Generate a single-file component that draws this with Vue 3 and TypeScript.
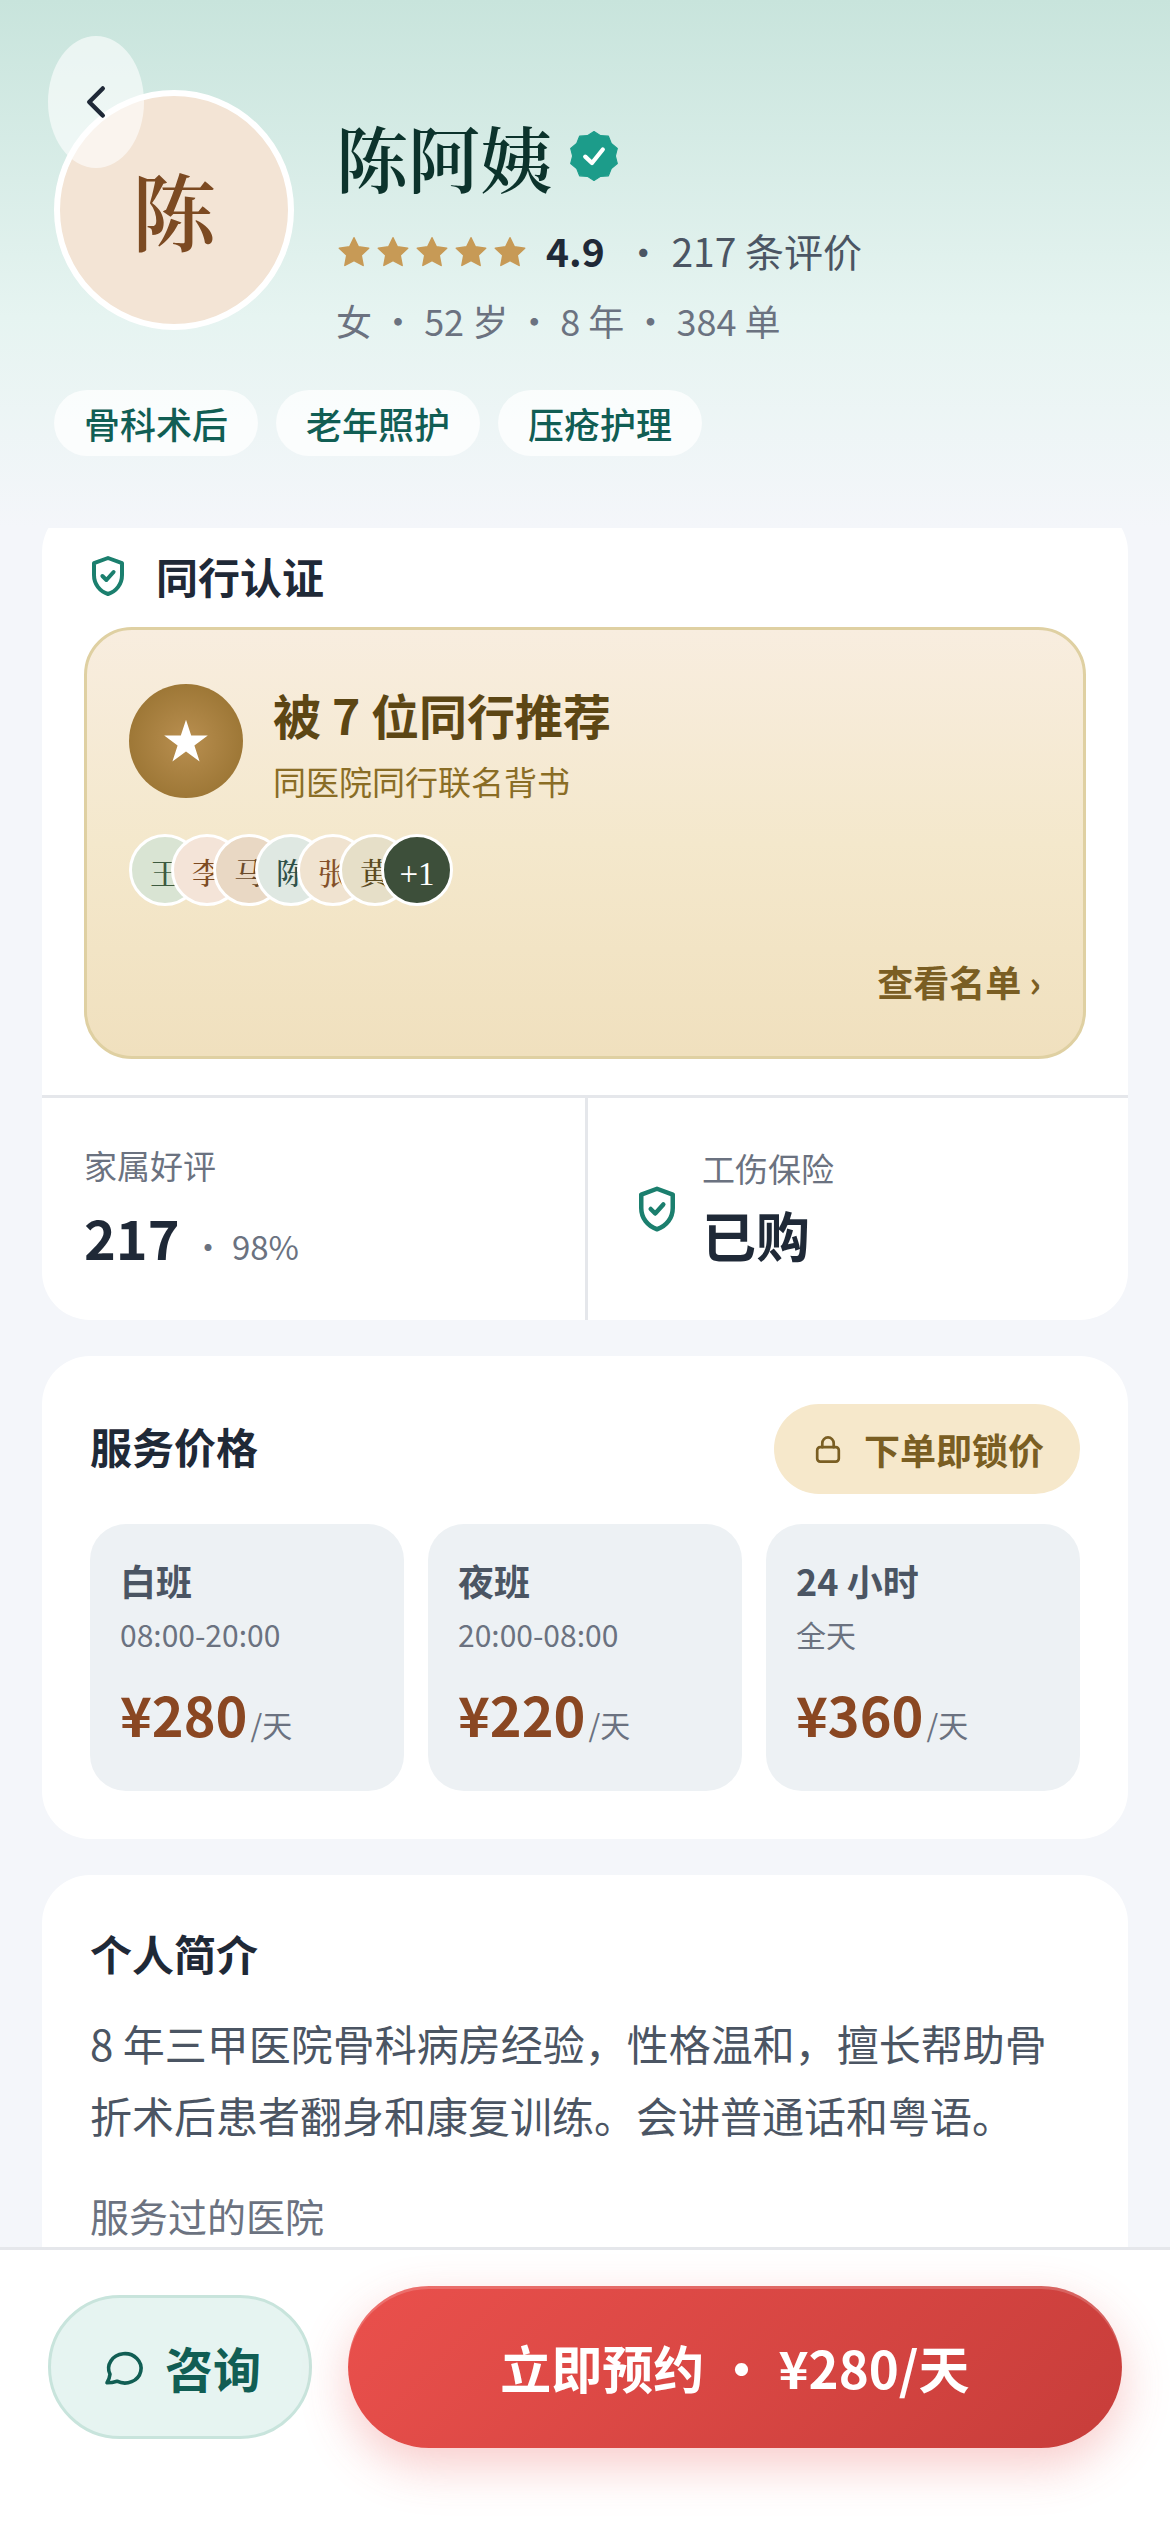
<script setup lang="ts">
interface Peer {
  name: string
  bg: string
  color: string
}

interface Shift {
  title: string
  time: string
  price: number
}

const tags: string[] = ['骨科术后', '老年照护', '压疮护理']

const peers: Peer[] = [
  { name: '王', bg: '#d9e4d3', color: '#3d5a3f' },
  { name: '李', bg: '#f4e4d8', color: '#7c4a22' },
  { name: '马', bg: '#e9d8c4', color: '#6b4a2a' },
  { name: '陈', bg: '#dfe8e2', color: '#2f5148' },
  { name: '张', bg: '#f0e3d0', color: '#84512a' },
  { name: '黄', bg: '#e6dfc8', color: '#5a4a1e' },
]

const shifts: Shift[] = [
  { title: '白班', time: '08:00-20:00', price: 280 },
  { title: '夜班', time: '20:00-08:00', price: 220 },
  { title: '24 小时', time: '全天', price: 360 },
]
</script>

<template>
  <div class="screen">
    <header class="hero">
      <button class="back" aria-label="返回">
        <svg width="54" height="54" viewBox="0 0 24 24" fill="none" stroke="currentColor" stroke-width="2" stroke-linecap="round" stroke-linejoin="round">
          <path d="M15 18 L9 12 L15 6" />
        </svg>
      </button>
      <div class="profile">
        <div class="avatar">陈</div>
        <div class="info">
          <div class="name-row">
            <h1>陈阿姨</h1>
            <svg width="54" height="54" viewBox="0 0 24 24">
              <path
                d="M12 1.1 L14.94 2.97 L18.41 3.18 L19.69 6.42 L22.37 8.63 L21.5 12 L22.37 15.37 L19.69 17.58 L18.41 20.82 L14.94 21.03 L12 22.9 L9.06 21.03 L5.59 20.82 L4.31 17.58 L1.63 15.37 L2.5 12 L1.63 8.63 L4.31 6.42 L5.59 3.18 L9.06 2.97 Z"
                fill="#1c9c8a"
                stroke="#1c9c8a"
                stroke-width=".5"
                stroke-linejoin="round"
              />
              <path d="M8.1 12.3 L11.1 15.1 L15.9 9.1" fill="none" stroke="#fff" stroke-width="1.9" stroke-linecap="round" stroke-linejoin="round" />
            </svg>
          </div>
          <div class="rating">
            <span class="stars">
              <svg v-for="n in 5" :key="n" width="36" height="36" viewBox="0 0 24 24" fill="#c79a56" stroke="#c79a56" stroke-width="1" stroke-linejoin="round">
                <path d="M12 3.2 L14.9 9.2 L21.8 10.1 L16.8 14.8 L18.1 21.6 L12 18.4 L5.9 21.6 L7.2 14.8 L2.2 10.1 L9.1 9.2 Z" />
              </svg>
            </span>
            <b>4.9</b>
            <span class="reviews">· 217 条评价</span>
          </div>
          <div class="meta">女 · 52 岁 · 8 年 · 384 单</div>
        </div>
      </div>
      <div class="tags">
        <span v-for="tag in tags" :key="tag" class="tag">{{ tag }}</span>
      </div>
    </header>

    <main class="content">
      <section class="card trust">
        <div class="trust-head">
          <svg width="48" height="48" viewBox="0 0 24 24" fill="none" stroke="#1b7f6e" stroke-width="2" stroke-linecap="round" stroke-linejoin="round">
            <path d="M12 3 L19 5.6 V11.5 C19 16 16.2 19.6 12 21 C7.8 19.6 5 16 5 11.5 V5.6 Z" />
            <path d="M9.2 12 L11.2 14 L14.8 10" />
          </svg>
          <h2>同行认证</h2>
        </div>
        <div class="endorse">
          <div class="endorse-top">
            <div class="medal">
              <svg width="48" height="48" viewBox="0 0 24 24" fill="#fff">
                <path d="M12 1.4 L14.6 9.3 L22.9 9.3 L16.2 14.2 L18.8 22.2 L12 17.3 L5.2 22.2 L7.8 14.2 L1.1 9.3 L9.4 9.3 Z" />
              </svg>
            </div>
            <div>
              <div class="endorse-title">被 7 位同行推荐</div>
              <div class="endorse-sub">同医院同行联名背书</div>
            </div>
          </div>
          <div class="peers">
            <span v-for="peer in peers" :key="peer.name" class="peer" :style="{ background: peer.bg, color: peer.color }">{{ peer.name }}</span>
            <span class="peer extra">+1</span>
          </div>
          <a class="more">查看名单 ›</a>
        </div>
        <div class="stats">
          <div class="stat family">
            <div class="label">家属好评</div>
            <div class="value">217<small>· 98%</small></div>
          </div>
          <div class="stat insurance">
            <svg width="54" height="54" viewBox="0 0 24 24" fill="none" stroke="#1b7f6e" stroke-width="2" stroke-linecap="round" stroke-linejoin="round">
              <path d="M12 3 L19 5.6 V11.5 C19 16 16.2 19.6 12 21 C7.8 19.6 5 16 5 11.5 V5.6 Z" />
              <path d="M9.2 12 L11.2 14 L14.8 10" />
            </svg>
            <div>
              <div class="label">工伤保险</div>
              <div class="value">已购</div>
            </div>
          </div>
        </div>
      </section>

      <section class="card prices">
        <div class="prices-head">
          <h2>服务价格</h2>
          <span class="lock">
            <svg width="36" height="36" viewBox="0 0 24 24" fill="none" stroke="currentColor" stroke-width="1.8" stroke-linecap="round" stroke-linejoin="round">
              <rect x="4.8" y="10.8" width="14.4" height="9.6" rx="2" />
              <path d="M8.2 10.8 V8.2 a3.8 3.9 0 0 1 7.6 0 V10.8" />
            </svg>
            下单即锁价
          </span>
        </div>
        <div class="shifts">
          <div v-for="shift in shifts" :key="shift.title" class="shift">
            <div class="shift-title">{{ shift.title }}</div>
            <div class="shift-time">{{ shift.time }}</div>
            <div class="shift-price">¥{{ shift.price }}<small>/天</small></div>
          </div>
        </div>
      </section>

      <section class="card bio">
        <h2>个人简介</h2>
        <p>8 年三甲医院骨科病房经验，性格温和，擅长帮助骨折术后患者翻身和康复训练。会讲普通话和粤语。</p>
        <div class="bio-sub">服务过的医院</div>
      </section>
    </main>

    <footer class="bar">
      <button class="consult">
        <svg width="48" height="48" viewBox="0 0 24 24" fill="none" stroke="currentColor" stroke-width="1.8" stroke-linecap="round" stroke-linejoin="round">
          <path d="M9 19.1 A8.1 7.35 0 1 0 5.5 15.6 Q5.3 17.8 4 19.9 Q6.6 19.9 9 19.1 Z" />
        </svg>
        咨询
      </button>
      <button class="book">立即预约 · ¥280/天</button>
    </footer>
  </div>
</template>

<style>
html,
body {
  margin: 0;
  background: #f4f6fa;
}
</style>

<style scoped>
.screen {
  display: flex;
  flex-direction: column;
  width: 1170px;
  height: 2532px;
  overflow: hidden;
  background: #f4f6fa;
  color: #1f2937;
  font-family: 'Noto Sans CJK SC', sans-serif;
}

h1,
h2,
p {
  margin: 0;
}

button {
  padding: 0;
  border: 0;
  font-family: inherit;
}

svg {
  display: block;
  flex: none;
}

h2 {
  font-size: 42px;
  line-height: 48px;
  font-weight: 700;
}

.hero {
  position: relative;
  flex: none;
  box-sizing: border-box;
  height: 528px;
  padding: 90px 54px 0;
  background: linear-gradient(180deg, #c8e4dc 0%, #e6f4f1 60%, #f4f6fa 100%);
}

.back {
  position: absolute;
  left: 48px;
  top: 36px;
  display: flex;
  align-items: center;
  justify-content: center;
  width: 96px;
  height: 132px;
  border-radius: 50%;
  background: rgba(255, 255, 255, 0.6);
  color: #1f2937;
}

.profile {
  display: flex;
  gap: 42px;
  height: 240px;
}

.avatar {
  flex: none;
  box-sizing: border-box;
  width: 240px;
  height: 240px;
  padding-top: 7px;
  border: 6px solid #fff;
  border-radius: 50%;
  background: #f3e4d5;
  color: #7c4a22;
  font: 600 84px/228px 'Liberation Serif', 'Noto Serif CJK SC', serif;
  text-align: center;
}

.info {
  padding-top: 18px;
}

.name-row {
  display: flex;
  align-items: center;
  gap: 15px;
  height: 96px;
}

h1 {
  padding-top: 13px;
  color: #0c332c;
  font: 600 72px/96px 'Liberation Serif', 'Noto Serif CJK SC', serif;
}

.rating {
  display: flex;
  align-items: center;
  height: 57px;
  margin-top: 18px;
  font-size: 39px;
  line-height: 57px;
}

.stars {
  display: flex;
  gap: 3px;
  margin-right: 18px;
}

.reviews {
  margin-left: 19px;
  color: #4b5563;
}

.meta {
  margin-top: 13px;
  color: #6b7280;
  font-size: 36px;
  line-height: 57px;
}

.tags {
  display: flex;
  gap: 18px;
  margin-top: 60px;
}

.tag {
  padding: 0 30px;
  border-radius: 33px;
  background: rgba(255, 255, 255, 0.75);
  color: #115e54;
  font-size: 36px;
  font-weight: 500;
  line-height: 66px;
}

.content {
  display: flex;
  flex: none;
  flex-direction: column;
  gap: 36px;
  box-sizing: border-box;
  height: 1719px;
  padding: 0 42px;
  overflow: hidden;
}

.card {
  flex: none;
  border-radius: 48px;
  background: #fff;
}

.trust {
  box-sizing: border-box;
  height: 816px;
  margin-top: -24px;
  padding-top: 48px;
  overflow: hidden;
}

.trust-head {
  display: flex;
  gap: 24px;
  padding: 0 42px;
}

.endorse {
  display: flex;
  flex-direction: column;
  box-sizing: border-box;
  height: 432px;
  margin: 27px 42px 36px;
  padding: 54px 42px 48px;
  border: 3px solid #dfd0a2;
  border-radius: 48px;
  background: linear-gradient(180deg, #f8eddf 0%, #f4e8cc 50%, #f0e0be 100%);
}

.endorse-top {
  display: flex;
  gap: 30px;
}

.medal {
  display: flex;
  align-items: center;
  justify-content: center;
  width: 114px;
  height: 114px;
  border-radius: 50%;
  background: radial-gradient(circle, #b98f50 0%, #9c7635 75%);
}

.endorse-title {
  color: #5c4614;
  font-size: 48px;
  font-weight: 700;
  line-height: 60px;
}

.endorse-sub {
  margin-top: 13px;
  color: #8a6d25;
  font-size: 33px;
  line-height: 48px;
}

.peers {
  display: flex;
  margin-top: 29px;
}

.peer {
  box-sizing: border-box;
  width: 72px;
  height: 72px;
  padding-top: 4px;
  border: 3px solid #fff;
  border-radius: 50%;
  font: 500 30px/66px 'Liberation Serif', 'Noto Serif CJK SC', serif;
  text-align: center;
}

.peer + .peer {
  margin-left: -30px;
}

.extra {
  background: #3d4f3a;
  color: #fff;
  font-size: 33px;
}

.more {
  margin-top: auto;
  color: #7a5e23;
  font-size: 36px;
  font-weight: 700;
  line-height: 54px;
  text-align: right;
}

.stats {
  display: flex;
  height: 222px;
  border-top: 3px solid #e5e7eb;
}

.stat {
  box-sizing: border-box;
  padding-left: 42px;
}

.family {
  width: 546px;
  padding-top: 43px;
  border-right: 3px solid #e5e7eb;
}

.insurance {
  display: flex;
  flex: 1;
  align-items: center;
  gap: 18px;
}

.label {
  color: #6b7280;
  font-size: 33px;
  line-height: 48px;
}

.value {
  margin-top: 4px;
  font-size: 54px;
  font-weight: 700;
  line-height: 78px;
}

.family .value {
  margin-top: 9px;
}

.value small {
  margin-left: 12px;
  color: #6b7280;
  font-size: 33px;
  font-weight: 400;
}

.prices {
  box-sizing: border-box;
  height: 483px;
  padding: 48px;
}

.prices-head {
  display: flex;
  align-items: center;
  justify-content: space-between;
  height: 90px;
}

.prices-head h2 {
  padding-bottom: 6px;
}

.lock {
  display: flex;
  align-items: center;
  gap: 18px;
  padding: 0 36px;
  border-radius: 45px;
  background: #f6e8cb;
  color: #7a5e23;
  font-size: 36px;
  font-weight: 700;
  line-height: 90px;
}

.shifts {
  display: grid;
  grid-template-columns: repeat(3, 1fr);
  gap: 24px;
  margin-top: 30px;
}

.shift {
  box-sizing: border-box;
  height: 267px;
  padding: 30px;
  border-radius: 36px;
  background: #edf1f4;
}

.shift-title {
  color: #4b5563;
  font-size: 36px;
  font-weight: 700;
  line-height: 52px;
}

.shift-time {
  margin-top: 6px;
  color: #6b7280;
  font-size: 30px;
  line-height: 45px;
}

.shift-price {
  margin-top: 18px;
  color: #8a4722;
  font-size: 54px;
  font-weight: 700;
  line-height: 78px;
}

.shift-price small {
  margin-left: 3px;
  color: #6b7280;
  font-size: 30px;
  font-weight: 400;
}

.bio {
  height: 600px;
  padding: 54px 48px 0;
}

.bio p {
  margin-top: 30px;
  color: #4b5563;
  font-size: 42px;
  line-height: 72px;
}

.bio-sub {
  margin-top: 36px;
  color: #6b7280;
  font-size: 39px;
  line-height: 57px;
}

.bar {
  display: flex;
  flex: 1;
  align-items: flex-start;
  gap: 36px;
  padding: 36px 48px 0;
  border-top: 3px solid #e5e7eb;
  background: #fff;
}

.consult {
  display: flex;
  align-items: center;
  justify-content: center;
  gap: 18px;
  box-sizing: border-box;
  width: 264px;
  height: 144px;
  margin-top: 9px;
  border: 3px solid #c8e4dc;
  border-radius: 72px;
  background: #e6f4f1;
  color: #115e54;
  font-size: 48px;
  font-weight: 700;
}

.book {
  width: 774px;
  height: 162px;
  border-radius: 81px;
  background: linear-gradient(135deg, #ea504c 0%, #c73d3a 100%);
  box-shadow:
    0 18px 48px rgba(229, 72, 68, 0.28),
    inset 0 3px 0 rgba(255, 255, 255, 0.18);
  color: #fff;
  font-size: 51px;
  font-weight: 700;
}
</style>
